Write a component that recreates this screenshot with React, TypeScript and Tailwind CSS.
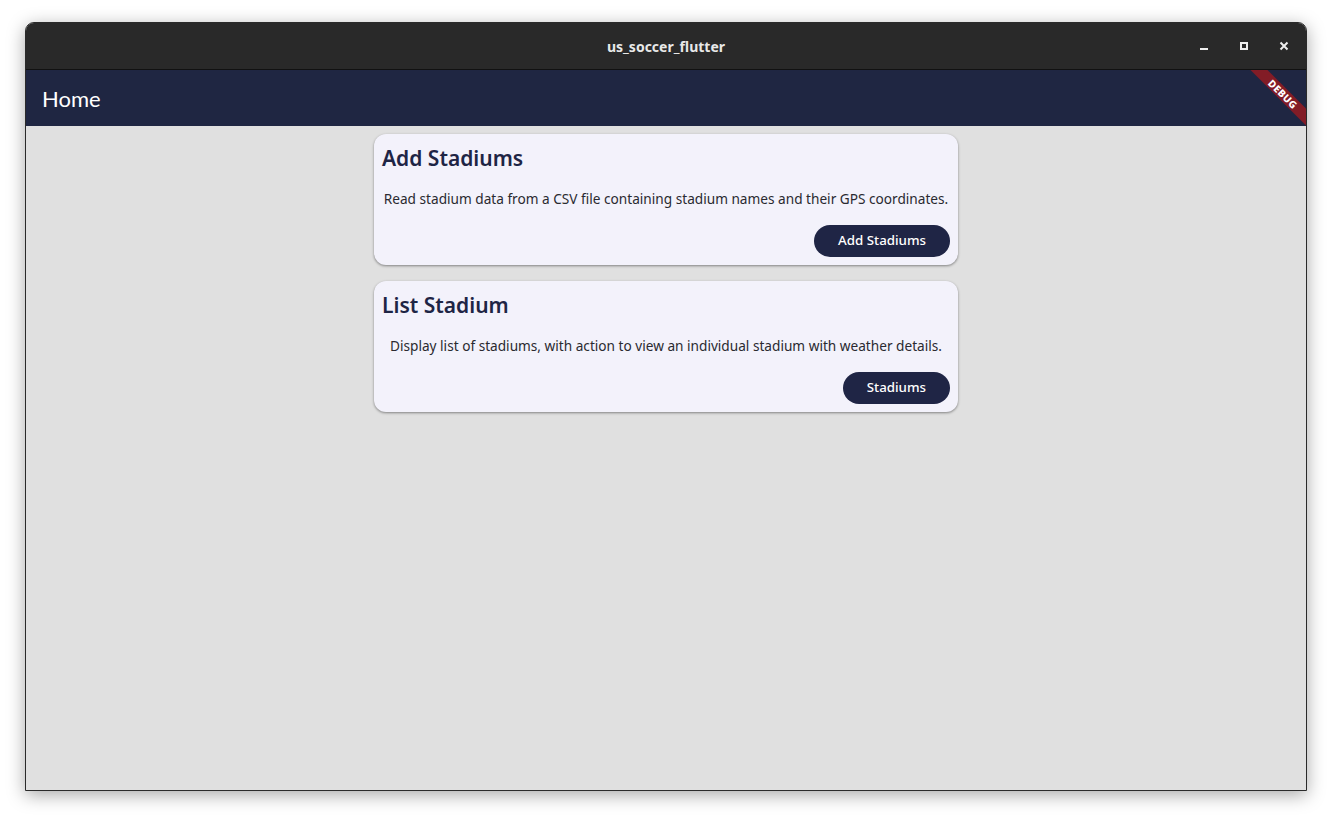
import React from "react";

function Card({ title, desc, action }: { title: string; desc: string; action: string }) {
  return (
    <div className="rounded-xl bg-[#f3f2fb] p-2 shadow-[0_1px_3px_rgba(0,0,0,0.3),0_1px_2px_rgba(0,0,0,0.15)]">
      <div className="h-[28px] text-[21px] font-semibold leading-[32px] text-[#1e2545]">{title}</div>
      <div className="mt-[19px] h-[20px] whitespace-nowrap text-center text-[13.65px] leading-[20px] text-[#2a2a30]">
        {desc}
      </div>
      <div className="mt-4 flex justify-end">
        <button className="h-8 rounded-full bg-[#1f2545] px-6 text-[13.3px] font-medium text-white">{action}</button>
      </div>
    </div>
  );
}

export default function App() {
  return (
    <div
      className="h-[819px] w-[1332px] overflow-hidden bg-white pl-[25px] pt-[22px]"
      style={{ fontFamily: "'Noto Sans', sans-serif" }}
    >
      <div className="flex h-[769px] w-[1282px] flex-col overflow-hidden rounded-t-[9px] border border-[#2a2a2a] bg-[#e0e0e0] shadow-[0_4px_18px_rgba(0,0,0,0.35)]">
        <div className="relative flex h-[47px] shrink-0 items-center justify-center border-b border-[#111] bg-[#292929]">
          <span className="text-[14px] font-bold text-[#e8e8e8]">us_soccer_flutter</span>
          <div className="absolute right-[14px] top-[14.5px] flex items-center gap-[24px]">
            <svg width="16" height="16" viewBox="0 0 16 16">
              <rect x="4" y="10" width="8" height="2" fill="#eee" />
            </svg>
            <svg width="16" height="16" viewBox="0 0 16 16">
              <rect x="5" y="5" width="6" height="6" fill="none" stroke="#eee" strokeWidth="2" />
            </svg>
            <svg width="16" height="16" viewBox="0 0 16 16">
              <path d="M4.5 4.5 L11.5 11.5 M11.5 4.5 L4.5 11.5" stroke="#eee" strokeWidth="2" />
            </svg>
          </div>
        </div>
        <div className="relative flex h-[56px] shrink-0 items-center bg-[#1f2642] px-4">
          <span className="text-[22px] text-white" style={{ fontFamily: "Lato, sans-serif" }}>
            Home
          </span>
          <div className="pointer-events-none absolute right-0 top-0 h-[56px] w-[56px] overflow-hidden">
            <div className="absolute left-[-17.5px] top-[17.5px] flex h-[12px] w-[100px] rotate-45 items-center justify-center bg-[#821c26] text-[10px] font-extrabold leading-none tracking-[0.4px] text-white">
              DEBUG
            </div>
          </div>
        </div>
        <div className="flex flex-1 justify-center pt-2">
          <div className="flex w-[584px] flex-col gap-4">
            <Card
              title="Add Stadiums"
              desc="Read stadium data from a CSV file containing stadium names and their GPS coordinates."
              action="Add Stadiums"
            />
            <Card
              title="List Stadium"
              desc="Display list of stadiums, with action to view an individual stadium with weather details."
              action="Stadiums"
            />
          </div>
        </div>
      </div>
    </div>
  );
}
